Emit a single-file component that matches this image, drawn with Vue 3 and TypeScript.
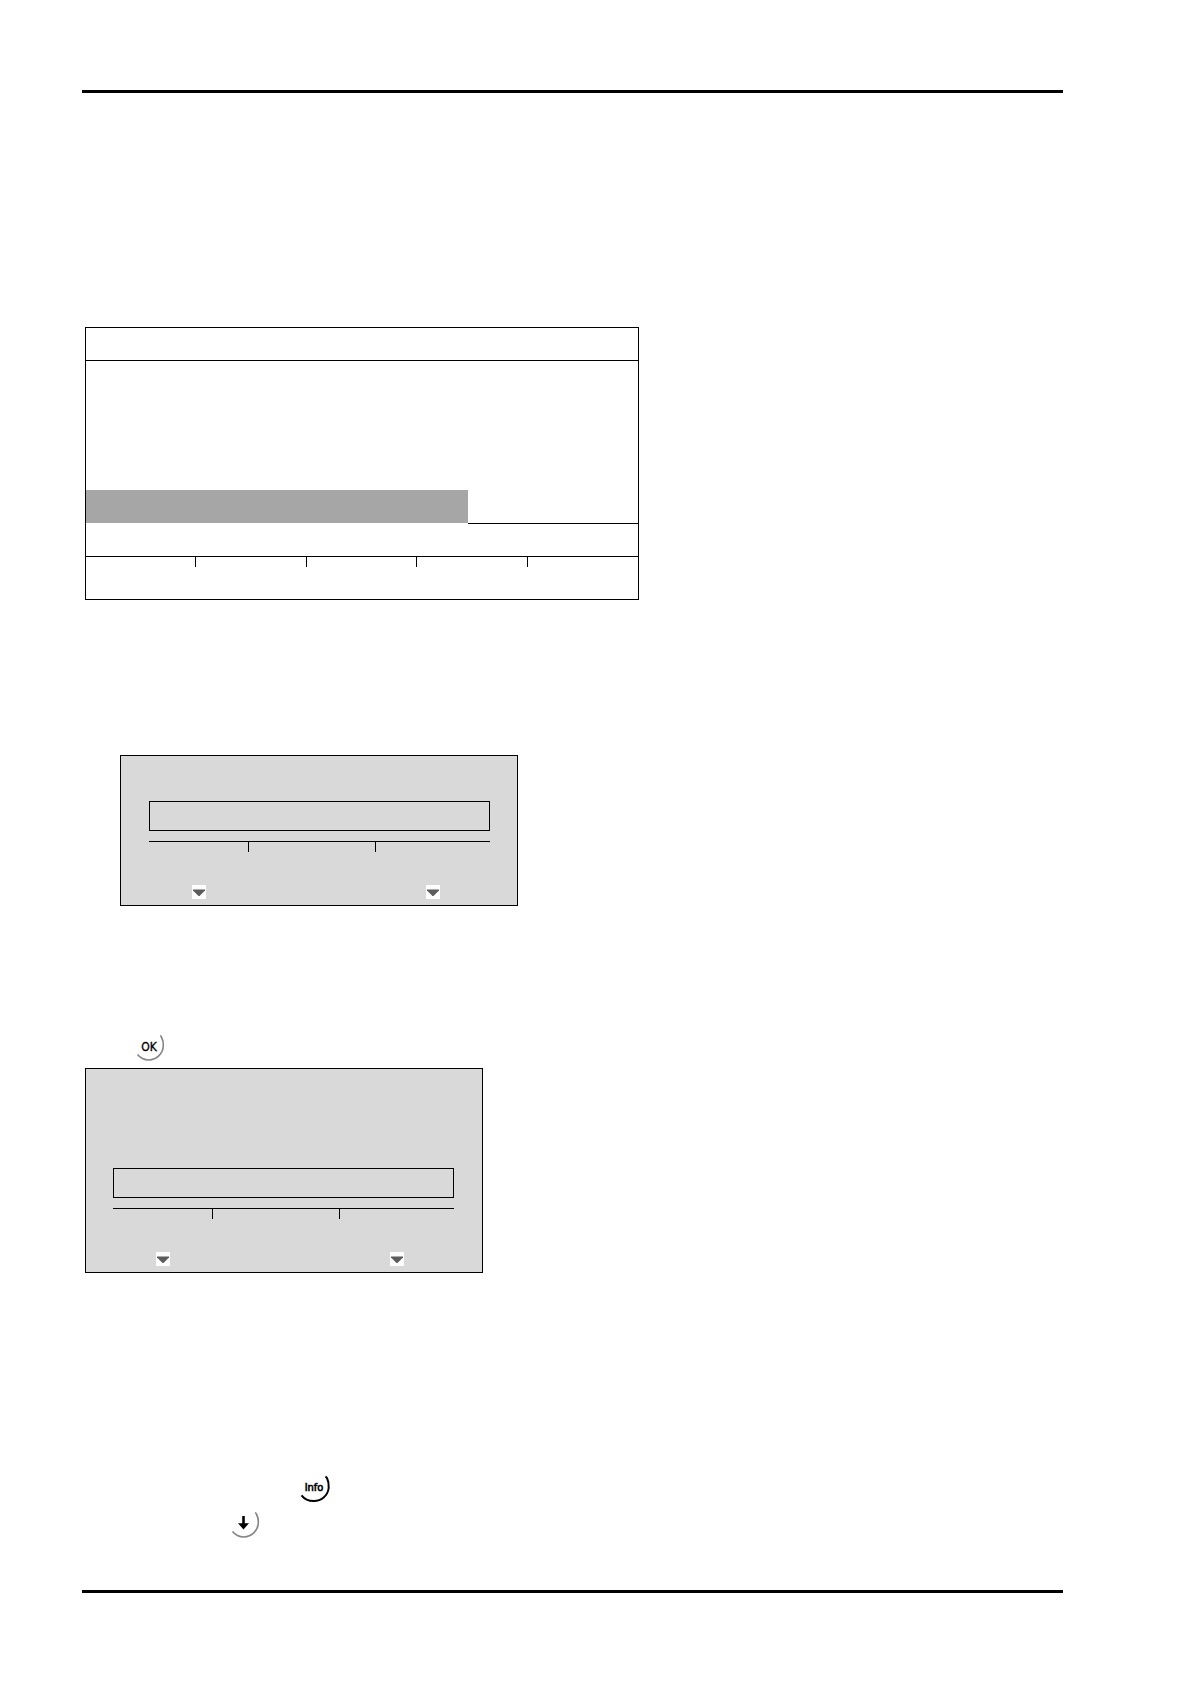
<script setup lang="ts">
interface Panel {
  id: string
  kind: 'indented' | 'tall'
}

const softkeys: number[] = [1, 2, 3, 4, 5]
const panels: Panel[] = [
  { id: 'entry', kind: 'indented' },
  { id: 'confirm', kind: 'tall' },
]
const ring = 'M23.2 1.5Q24 2 24.6 3.5A14.8 14.8 0 0 1 26.3 11.5A14.8 14.8 0 0 1 11.8 26A14.8 14.8 0 0 1 .5 20.5'
</script>

<template>
  <main class="page">
    <hr class="rule" />

    <section class="display">
      <div class="display-head"></div>
      <div class="display-body"></div>
      <div class="display-select">
        <div class="selected"></div>
        <div class="unselected"></div>
      </div>
      <div class="display-status"></div>
      <div class="softkeys">
        <span v-for="key in softkeys" :key="key" class="softkey"></span>
      </div>
    </section>

    <template v-for="panel in panels" :key="panel.id">
      <div v-if="panel.kind === 'tall'" class="key-row ok-row">
        <button class="key" type="button">
          <svg class="ring" viewBox="0 0 28 28" aria-hidden="true">
            <path :d="ring" fill="none" stroke="#858585" stroke-width="1.6" />
          </svg>
          <span class="label ok-label">OK</span>
        </button>
      </div>
      <section class="panel" :class="panel.kind">
        <div class="entry"></div>
        <div class="scale"><span></span><span></span><span></span></div>
        <div class="arrows">
          <svg v-for="n in 2" :key="n" class="arrow" viewBox="0 0 14 14" aria-hidden="true">
            <rect width="14" height="14" fill="#fdfdfd" />
            <path d="M1 4.5H13V5.5L7.5 11H6.5L1 5.5Z" fill="#5c5c5c" />
          </svg>
        </div>
      </section>
    </template>

    <div class="key-row info-row">
      <button class="key" type="button">
        <svg class="ring" viewBox="0 0 28 28" aria-hidden="true">
          <path d="M24.5 1.5L26 3Q28 7 27.7 13A14.8 14.8 0 0 1 12.5 26Q5 26 .5 20.3" fill="none" stroke="#000" stroke-width="2" />
        </svg>
        <span class="label info-label">Info</span>
      </button>
    </div>
    <div class="key-row down-row">
      <button class="key" type="button" aria-label="Down">
        <svg class="ring" viewBox="0 0 28 28" aria-hidden="true">
          <path :d="ring" fill="none" stroke="#858585" stroke-width="1.6" />
          <path d="M10.2 5H12.8V12.2H17L11.5 18.5L6 12.2H10.2Z" fill="#000" />
        </svg>
      </button>
    </div>

    <hr class="rule last" />
  </main>
</template>

<style>
body {
  margin: 0;
  background: #fff;
}
</style>

<style scoped>
.page {
  display: flex;
  flex-direction: column;
  padding: 90px 128px 91px 82px;
  font-family: "DejaVu Sans Condensed", "DejaVu Sans", sans-serif;
}
.rule {
  width: 100%;
  height: 3px;
  margin: 0;
  border: 0;
  background: #000;
}
.display {
  box-sizing: border-box;
  width: 100%;
  max-width: 554px;
  margin: 234px 0 0 3px;
  border: 1px solid #000;
}
.display-head,
.display-status {
  height: 32px;
  border-bottom: 1px solid #000;
}
.display-body {
  height: 129px;
}
.display-select {
  display: flex;
  height: 34px;
}
.selected {
  width: 382px;
  height: 33px;
  background: #a6a6a6;
}
.unselected {
  flex: 1;
  border-bottom: 1px solid #000;
}
.softkeys {
  display: grid;
  grid-template-columns: repeat(5, 1fr);
  height: 42px;
}
.softkey {
  height: 10px;
}
.softkey:not(:last-child) {
  border-right: 1px solid #000;
}
.panel {
  box-sizing: border-box;
  width: 100%;
  max-width: 398px;
  border: 1px solid #000;
  background: #d9d9d9;
}
.indented {
  margin: 155px 0 0 38px;
  padding: 45px 27px 0 28px;
}
.tall {
  margin-left: 3px;
  padding: 99px 28px 0 27px;
}
.entry {
  box-sizing: border-box;
  height: 30px;
  border: 1px solid #000;
}
.scale {
  display: grid;
  grid-template-columns: 100fr 127fr 114fr;
  height: 10px;
  margin-top: 10px;
  border-top: 1px solid #000;
}
.scale span:not(:last-child) {
  border-right: 1px solid #000;
}
.arrows {
  display: flex;
  gap: 220px;
  margin: 33px 0 6px 43px;
}
.arrow {
  display: block;
  flex: none;
  width: 14px;
  height: 14px;
}
.key-row {
  display: flex;
}
.key {
  position: relative;
  display: flex;
  width: 28px;
  height: 28px;
  padding: 0;
  border: 0;
  background: none;
  color: #000;
  font-family: inherit;
}
.ring {
  position: absolute;
  inset: 0;
  width: 28px;
  height: 28px;
  overflow: visible;
}
.label {
  width: 24px;
  text-align: center;
  line-height: 26px;
  -webkit-text-stroke: 0.3px #000;
}
.ok-label {
  font-size: 12px;
}
.info-label {
  width: 26px;
  font-size: 11px;
  -webkit-text-stroke-width: 0.6px;
}
.ok-row {
  margin: 128px 0 6px 55px;
}
.info-row {
  margin: 202px 0 0 219px;
}
.down-row {
  margin: 8px 0 0 150px;
}
.last {
  margin-top: 51px;
}
</style>
